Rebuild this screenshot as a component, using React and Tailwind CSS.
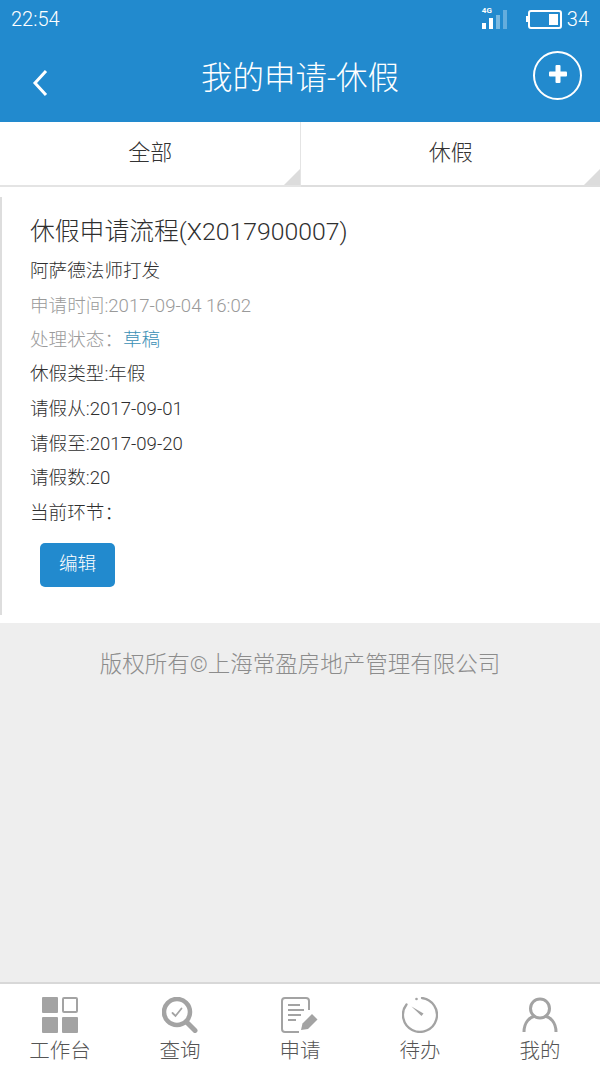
import React from "react";

const font = "font-['Roboto','Noto_Sans_CJK_SC',sans-serif]";

const GridIcon = () => (
  <svg width="36" height="36" viewBox="0 0 36 36" fill="#a3a3a3">
    <rect x="0" y="0" width="16" height="16" rx="1" />
    <rect x="21" y="1" width="14" height="14" rx="1" fill="none" stroke="#a3a3a3" strokeWidth="2" />
    <rect x="0" y="20" width="16" height="16" rx="1" />
    <rect x="20" y="20" width="16" height="16" rx="1" />
  </svg>
);

const SearchIcon = () => (
  <svg width="36" height="36" viewBox="0 0 36 36" fill="none" stroke="#a3a3a3">
    <circle cx="15" cy="15" r="13" strokeWidth="4.500" />
    <path d="M25 25.500l8 8" strokeWidth="5" strokeLinecap="round" />
    <path d="M10.500 16l3 3 6-7.500" strokeWidth="1.800" strokeLinecap="round" />
  </svg>
);

const FormIcon = () => (
  <svg width="38" height="36" viewBox="0 0 38 36" fill="none" stroke="#a3a3a3">
    <path d="M18 35H4a3 3 0 0 1-3-3V4a3 3 0 0 1 3-3h21a3 3 0 0 1 3 3v9" strokeWidth="2" />
    <path d="M7 8h12M7 13h16M7 18h13M7 23h8" strokeWidth="2" />
    <path d="M20 33l1.500-6.500L31 17l5.500 5.500L27 32z" fill="#a3a3a3" stroke="none" />
  </svg>
);

const TimerIcon = () => (
  <svg width="36" height="36" viewBox="0 0 36 36" fill="none" stroke="#a3a3a3">
    <path d="M20 1A17 17 0 1 1 4.500 7.500" strokeWidth="2.300" strokeLinecap="round" />
    <path d="M9.500 9.500L21.500 16.500 19.500 19z" fill="#a3a3a3" stroke="none" />
    <circle cx="14.500" cy="2" r="1.300" fill="#a3a3a3" stroke="none" />
  </svg>
);

const UserIcon = () => (
  <svg width="36" height="36" viewBox="0 0 36 36" fill="none" stroke="#a3a3a3">
    <circle cx="18" cy="11.500" r="9.500" strokeWidth="3" />
    <path d="M2 35c0-10 6-15 11-16M34 35c0-10-6-15-11-16" strokeWidth="3" />
  </svg>
);

const navItems = [
  { label: "工作台", icon: <GridIcon /> },
  { label: "查询", icon: <SearchIcon /> },
  { label: "申请", icon: <FormIcon /> },
  { label: "待办", icon: <TimerIcon /> },
  { label: "我的", icon: <UserIcon /> },
];

const fields = [
  { text: "休假类型:年假", h: "h-[34px]" },
  { text: "请假从:2017-09-01", h: "h-[35px]" },
  { text: "请假至:2017-09-20", h: "h-[35px]" },
  { text: "请假数:20", h: "h-[34px]" },
  { text: "当前环节：", h: "h-[35px]" },
];

const Tab = ({ label, border }) => (
  <div className={`relative flex-1 flex items-center justify-center border-b-2 border-[#dedede] bg-white ${border}`}>
    <span className="text-[22px] font-light text-[#333] -mt-[2px] ml-[1px]">{label}</span>
    <div className="absolute right-0 bottom-0 w-0 h-0 border-l-[16px] border-l-transparent border-b-[16px] border-b-[#dcdcdc]" />
  </div>
);

export default function App() {
  return (
    <div className={`w-[600px] h-[1067px] flex flex-col bg-[#eeeeee] overflow-hidden ${font}`}>
      {/* header */}
      <div className="h-[122px] bg-[#228ace] text-white flex flex-col">
        <div className="h-[38px] flex items-center justify-between pl-[11px] pr-[11px]">
          <span className="text-[20px] font-light">22:54</span>
          <div className="flex items-center">
            <div className="relative w-[30px] h-[20px] mr-[14px]">
              <span className="absolute left-0 -top-[3px] text-[8px] font-bold leading-[10px]">4G</span>
              <div className="absolute bottom-0 left-0 flex items-end gap-[3px]">
                <div className="w-[4px] h-[6px] bg-white" />
                <div className="w-[4px] h-[11px] bg-white" />
                <div className="w-[4px] h-[14px] bg-white/40" />
                <div className="w-[4px] h-[19px] bg-white/30" />
              </div>
            </div>
            <div className="w-[2px] h-[6px] bg-white" />
            <div className="w-[34px] h-[19px] border-2 border-white rounded-[3px] flex justify-end p-[2px] mr-[5px]">
              <div className="w-[9px] h-full bg-white" />
            </div>
            <span className="text-[20px] font-light">34</span>
          </div>
        </div>
        <div className="flex-1 flex items-center justify-between pl-[32px] pr-[18px]">
          <svg width="16" height="28" viewBox="0 0 16 28" fill="none" stroke="white" strokeWidth="3" className="mt-[5px]">
            <path d="M14 2L3 14l11 12" />
          </svg>
          <span className="text-[31.500px] font-light -mt-[3px] ml-[19px]">我的申请-休假</span>
          <div className="w-[49px] h-[49px] rounded-full border-2 border-white flex items-center justify-center -mt-[9px]">
            <svg width="18" height="18" viewBox="0 0 18 18" fill="white" className="-mt-[4px]">
              <rect x="6.500" y="0" width="5" height="18" rx="1" />
              <rect x="0" y="6.500" width="18" height="5" rx="1" />
            </svg>
          </div>
        </div>
      </div>

      {/* tabs */}
      <div className="h-[65px] flex bg-[#eeeeee]">
        <Tab label="全部" border="border-r border-[#e4e4e4]" />
        <Tab label="休假" border="" />
      </div>

      {/* card */}
      <div className="h-[436px] bg-white pt-[10px]">
        <div className="h-[418px] border-l-2 border-[#dddddd] pl-[28px] pt-[17px]">
          <div className="h-[36px] flex items-center text-[24.800px] font-light text-[#2f2f2f] leading-none">休假申请流程(X2017900007)</div>
          <div className="pt-[4px] text-[18.600px] font-light text-[#2f2f2f]">
            <div className="h-[35px] flex items-center">阿萨德法师打发</div>
            <div className="h-[35px] flex items-center text-[#9a9a9a]">申请时间:2017-09-04 16:02</div>
            <div className="h-[34px] flex items-center text-[#9a9a9a]">
              处理状态：<span className="text-[#3a8fb5]">草稿</span>
            </div>
            {fields.map((f) => (
              <div key={f.text} className={`${f.h} flex items-center`}>{f.text}</div>
            ))}
          </div>
          <button className="mt-[12px] ml-[10px] w-[75px] h-[44px] rounded-[5px] bg-[#228ace] text-white text-[18.600px] font-light">编辑</button>
        </div>
      </div>

      {/* copyright */}
      <div className="flex-1 flex justify-center pt-[26px] text-[22.500px] leading-[30px] font-light text-[#8c8c8c]">
        版权所有©上海常盈房地产管理有限公司
      </div>

      {/* bottom nav */}
      <div className="h-[85px] border-t-2 border-[#d8d8d8] bg-white flex">
        {navItems.map((item) => (
          <div key={item.label} className="flex-1 flex flex-col items-center pt-[13px]">
            <div className="h-[36px]">{item.icon}</div>
            <span className="mt-[4px] text-[20.500px] leading-[28px] font-light text-[#555]">{item.label}</span>
          </div>
        ))}
      </div>
    </div>
  );
}
